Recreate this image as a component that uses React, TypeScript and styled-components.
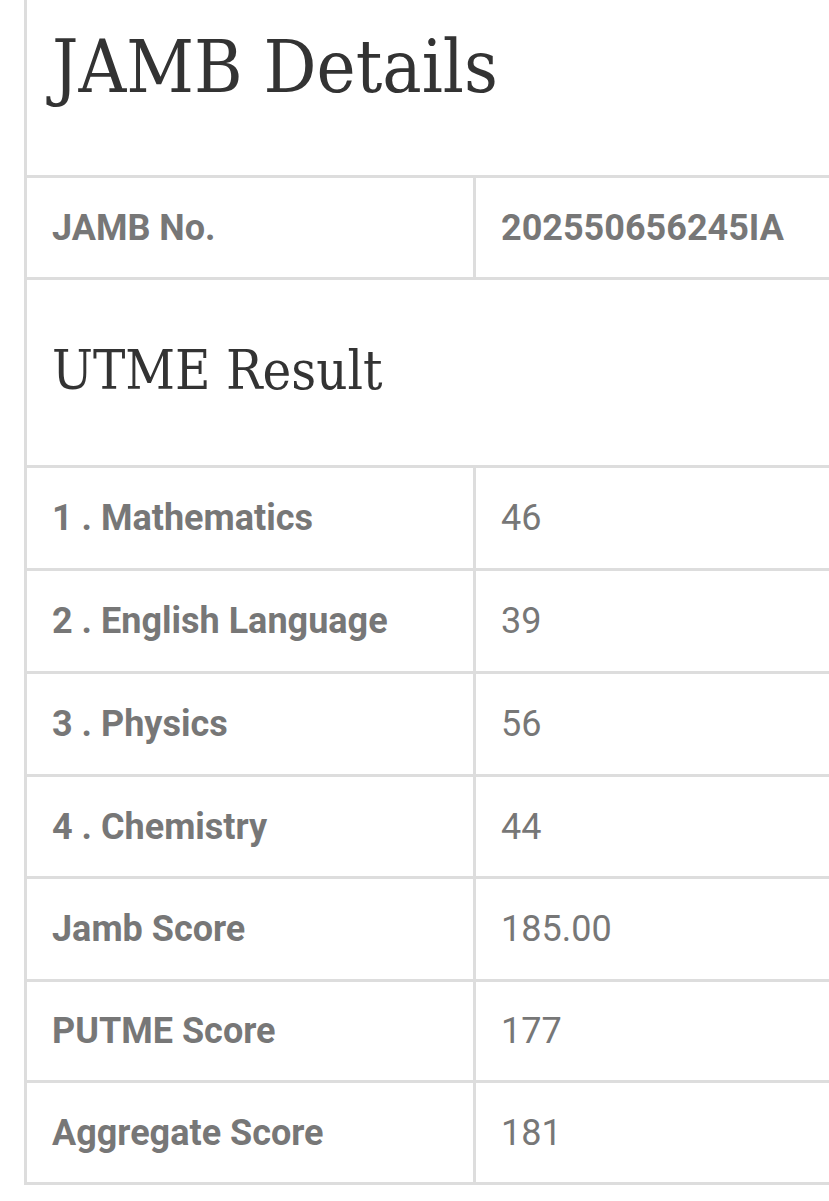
import React from "react";
import styled, { createGlobalStyle } from "styled-components";

const GlobalStyle = createGlobalStyle`
  html, body {
    margin: 0;
    padding: 0;
    background: #ffffff;
    overflow: hidden;
  }
  * { box-sizing: border-box; }
`;

const Page = styled.div`
  width: 829px;
  height: 1201px;
  padding-left: 24px;
  overflow: hidden;
  background: #ffffff;
`;

const Panel = styled.div`
  width: 900px;
  border-left: 3px solid #dddddd;
  display: flex;
  flex-direction: column;
`;

const HeadingRow = styled.div<{ $h: number }>`
  height: ${(p) => p.$h}px;
  border-bottom: 3px solid #dddddd;
  display: flex;
  align-items: center;
  padding-left: 25px;
`;

const Title = styled.h1<{ $size: number; $shift: number }>`
  margin: 0;
  font-family: "DejaVu Serif Condensed", "DejaVu Serif", "Liberation Serif", serif;
  font-stretch: semi-condensed;
  font-weight: 400;
  font-size: ${(p) => p.$size}px;
  line-height: 1;
  color: #333333;
  transform: translateY(${(p) => p.$shift}px);
`;

const Row = styled.div<{ $h: number }>`
  display: grid;
  grid-template-columns: 449px 1fr;
  height: ${(p) => p.$h}px;
  border-bottom: 3px solid #dddddd;
`;

const Cell = styled.div<{ $bold?: boolean; $divider?: boolean }>`
  display: flex;
  align-items: center;
  padding-left: 25px;
  font-family: Roboto, "Liberation Sans", sans-serif;
  font-size: 36px;
  font-weight: ${(p) => (p.$bold ? 700 : 400)};
  color: #777777;
  border-right: ${(p) => (p.$divider ? "3px solid #dddddd" : "none")};
`;

const subjects: [string, string, number][] = [
  ["1 . Mathematics", "46", 103],
  ["2 . English Language", "39", 103],
  ["3 . Physics", "56", 103],
  ["4 . Chemistry", "44", 102],
  ["Jamb Score", "185.00", 103],
  ["PUTME Score", "177", 101],
  ["Aggregate Score", "181", 102],
];

export default function App() {
  return (
    <>
      <GlobalStyle />
      <Page>
        <Panel>
          <HeadingRow $h={178}>
            <Title $size={73.5} $shift={-21}>JAMB Details</Title>
          </HeadingRow>
          <Row $h={102}>
            <Cell $bold $divider>JAMB No.</Cell>
            <Cell $bold>202550656245IA</Cell>
          </Row>
          <HeadingRow $h={188}>
            <Title $size={54} $shift={-2}>UTME Result</Title>
          </HeadingRow>
          {subjects.map(([label, value, h]) => (
            <Row key={label} $h={h}>
              <Cell $bold $divider>{label}</Cell>
              <Cell>{value}</Cell>
            </Row>
          ))}
        </Panel>
      </Page>
    </>
  );
}
